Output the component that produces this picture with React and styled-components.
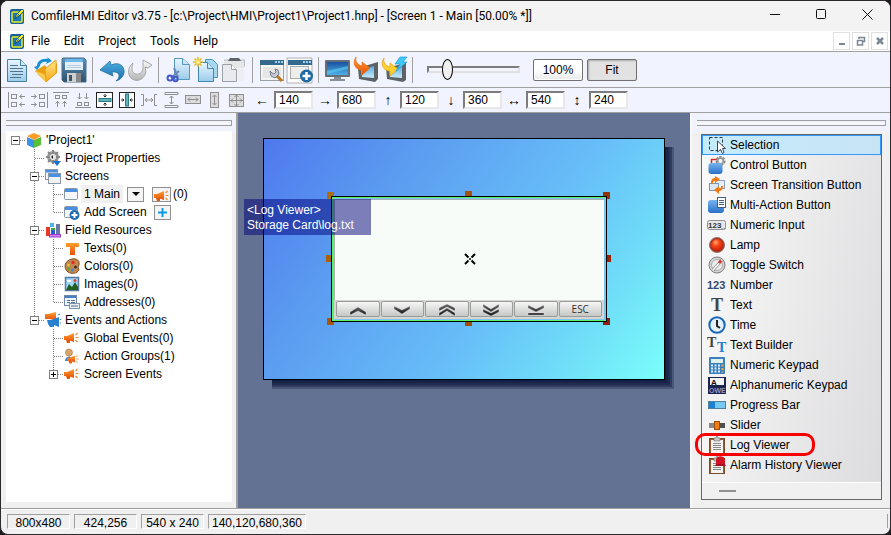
import { useState } from 'react';
import styled, { createGlobalStyle } from 'styled-components';

const toolGroups = [
    [['New', 'newDoc'], ['Open', 'open'], ['Save', 'save']],
    [['Undo', 'undo'], ['Redo', 'redo']],
    [['Cut', 'cut'], ['Copy', 'copy'], ['Paste', 'paste']],
    [['Screen settings', 'winTool'], ['Add screen', 'winAdd']],
    [['Simulate', 'monitor'], ['Download', 'download'], ['Quick download', 'flash']],
];

const alignTools = [
    ['Align left', 'alignLeft'], ['Align right', 'alignRight'], ['Align top', 'alignTop'],
    ['Align bottom', 'alignBottom'], ['Center vertically', 'centerV'], ['Center horizontally', 'centerH'],
    ['Space across', 'spaceH'], ['Space down', 'spaceV'], ['Same width', 'sameW'],
    ['Same height', 'sameH'], ['Same size', 'sameSize'],
];

const fields = [
    ['Left', '←', '140'], ['Right', '→', '680'], ['Top', '↑', '120'],
    ['Bottom', '↓', '360'], ['Width', '↔', '540'], ['Height', '↕', '240'],
];

// cells: b = blank, v = line, t = tee, e = last branch; box is drawn on the last cell
const treeRows = [
    { cells: 'r', box: '-', icon: 'cube', text: "'Project1'" },
    { cells: 'bt', icon: 'gear', text: 'Project Properties' },
    { cells: 'bt', box: '-', icon: 'windows', text: 'Screens' },
    { cells: 'bvt', icon: 'win', text: '1 Main', extra: 'main' },
    { cells: 'bve', icon: 'winPlus', text: 'Add Screen', extra: 'add' },
    { cells: 'bt', box: '-', icon: 'fields', text: 'Field Resources' },
    { cells: 'bvt', icon: 'orangeT', text: 'Texts(0)' },
    { cells: 'bvt', icon: 'palette', text: 'Colors(0)' },
    { cells: 'bvt', icon: 'picture', text: 'Images(0)' },
    { cells: 'bve', icon: 'address', text: 'Addresses(0)' },
    { cells: 'be', box: '-', icon: 'events', text: 'Events and Actions' },
    { cells: 'bbt', icon: 'horn', text: 'Global Events(0)' },
    { cells: 'bbt', icon: 'userHorn', text: 'Action Groups(1)' },
    { cells: 'bbe', box: '+', icon: 'horn', text: 'Screen Events' },
];

const toolbox = [
    ['Selection', 'select'], ['Control Button', 'control'], ['Screen Transition Button', 'transition'],
    ['Multi-Action Button', 'multi'], ['Numeric Input', 'numInput'], ['Lamp', 'lamp'],
    ['Toggle Switch', 'toggle'], ['Number', 'number'], ['Text', 'text'], ['Time', 'time'],
    ['Text Builder', 'builder'], ['Numeric Keypad', 'keypad'], ['Alphanumeric Keypad', 'alpha'],
    ['Progress Bar', 'progress'], ['Slider', 'slider'], ['Log Viewer', 'log'],
    ['Alarm History Viewer', 'alarm'],
];

const handles = [
    [63, 53, '#b06c0c'], [201, 52, '#a4520c'], [339, 53, '#943208'], [62, 116, '#ac620c'],
    [340, 116, '#942408'], [63, 179, '#ac560c'], [201, 180, '#a44808'], [339, 179, '#901c10'],
];

const horn = (
    <>
        <path d="M0 6h3l7-3v9l-6-2H0z" fill="url(#orange)" />
        <path d="M2 10h4v3H3z" fill="#e05a08" />
        <path d="M11.500 5l2-2M11.500 7.500h3M11.500 10l2 2" stroke="#f08a40" strokeWidth="1.200" />
    </>
);
const miniWin = (
    <>
        <rect x=".5" y="2.500" width="13" height="11" rx="1" fill="#f4f6f8" stroke="#8a98a8" />
        <path d="M1 3h12v3H1z" fill="#4a8ee0" />
    </>
);
const clipboard = (
    <>
        <rect x="1.500" y="2.500" width="15" height="15" fill="#9a5a30" stroke="#7c4c2c" />
        <path d="M3 4h12v13H3z" fill="#f4f4f2" />
        <path d="M5 7.500h8M5 9.500h8M5 11.500h8M5 13.500h8" stroke="#888" />
        <path d="M6 5V2h2l1-2 1 2h2v3z" fill="#c8c8c4" stroke="#777" strokeWidth=".7" />
    </>
);

const icons = {
    logo: [16, <>
        <rect x="1" y="1" width="14" height="15" rx="2" fill="#16619c" />
        <rect x="3" y="4" width="10" height="10" rx="1" fill="#1c78b8" stroke="#e8ea20" strokeWidth="1.500" />
        <path d="M6 11l1-4 6-6 2 2-6 6z" fill="#f4ee20" stroke="#155488" strokeWidth="1" />
        <path d="M7 10l3-4" stroke="#155488" />
    </>],
    newDoc: [26, <>
        <path d="M2.500 2.500h13l6 6v16h-19z" fill="url(#sheet)" stroke="#477d9e" />
        <path d="M15.500 2.500v6h6" fill="#cfe8f8" stroke="#477d9e" />
        <path d="M5 8.500h8M5 11.500h13M5 14.500h13M7 17.500h11M5 20.500h11" stroke="#54738a" />
    </>],
    open: [26, <>
        <path d="M2 14l10-6 2 3 8-8 2 4v9l-11 9z" fill="#e8a010" />
        <path d="M3 14l10 4v7L5 18z" fill="#f8c850" />
        <path d="M12 12l11-9v13l-10 9z" fill="url(#gold)" stroke="#e49a0c" strokeWidth=".8" />
        <path d="M4 9c0-5 5-8 11-7l-1-2 5 4-6 3 1-2c-4-1-7 1-7 4l-3 4-3-3z" fill="#1690d0" />
    </>],
    save: [26, <>
        <path d="M2 1h21l2 2v22H3l-2-2V2z" fill="url(#navy)" stroke="#4a7090" />
        <path d="M4 2h18v11H4z" fill="#e4f1fa" />
        <path d="M4 2h18v3H4z" fill="#6cb8e8" />
        <path d="M6 8.500h14M6 10.500h14" stroke="#b8cedc" />
        <rect x="6" y="16" width="14" height="9" fill="#888" />
        <path d="M6 16h9v9H6z" fill="#d0d0d0" />
        <rect x="8" y="18" width="3" height="6" fill="#3a5468" />
    </>],
    undo: [26, <path d="M1 13L11 4l1 4c9-4 14 2 13 8-1 4-4 7-8 8 5-4 4-10-4-9l1 4z" fill="url(#blue)" stroke="#2474a4" strokeWidth=".8" />],
    redo: [26, <path d="M25 8L16 3v4c1 8-3 11-7 10-4-1-5-5-3-11-5 4-6 11-2 15 5 5 13 2 15-6l-1-5 3 1z" fill="url(#silver)" stroke="#a0a0a0" strokeWidth=".9" />],
    cut: [26, <>
        <path d="M9.500 1.500h8l7 6v15h-15z" fill="url(#sheet)" stroke="#5898c0" />
        <path d="M17.500 1.500v6h7" fill="#c8e6f8" stroke="#5898c0" />
        <path d="M9 11l4 9M14 14l-8 7" stroke="#6c88b8" strokeWidth="2" />
        <circle cx="5" cy="21" r="2.500" fill="none" stroke="#4458c8" strokeWidth="2" />
        <circle cx="10.500" cy="22" r="2.200" fill="none" stroke="#4458c8" strokeWidth="2" />
    </>],
    copy: [26, <>
        <path d="M12.500 2.500h7l5 5v13h-12z" fill="#a8d8f0" stroke="#4898c0" />
        <path d="M5.500 5.500h9l6 6v13h-15z" fill="url(#sheet)" stroke="#4088b0" />
        <path d="M14.500 5.500v6h6" fill="#c8e6f8" stroke="#4088b0" />
        <path d="M5 0v10M0 5h10M1.500 1.500l7 7M8.500 1.500l-7 7" stroke="#e8b820" strokeWidth="1.500" />
        <circle cx="5" cy="5" r="2" fill="#fff088" />
    </>],
    paste: [26, <>
        <path d="M3 3h21v8H3z" fill="#e4e6e8" />
        <path d="M3 3h21M23.500 3v6" stroke="#b8bcc0" />
        <path d="M7 4l2-3h9l2 3z" fill="#606468" />
        <path d="M1.500 7.500h9l5 5v12h-14z" fill="#e8eaf0" stroke="#9ca0a8" />
        <path d="M10.500 7.500v5h5" fill="#fff" stroke="#9ca0a8" />
        <path d="M16 12h7v12h-6" fill="#eceef4" />
    </>],
    winTool: [26, <>
        <rect x="1.500" y="3.500" width="23" height="20" fill="#f4f4f2" stroke="#9aa0a4" />
        <path d="M1 3h24v5H1z" fill="#34688c" />
        <path d="M16 4h2v2h-2zM19 4h2v2h-2zM22 4h2v2h-2z" fill="#9cd0f0" />
        <rect x="4" y="10" width="18" height="11" fill="#e6e6e4" />
        <path d="M17 18l6 6" stroke="#b87820" strokeWidth="3" />
        <path d="M11 14l1 5 4 2 4-4-1-4-3-1 1 3-2 2-2-1z" fill="#c8ccd8" stroke="#606480" strokeWidth=".8" />
    </>],
    winAdd: [26, <>
        <path d="M0 26V1h25v25z" fill="#fdfdfd" stroke="#b0b0b0" />
        <path d="M1 3h24v5H1z" fill="#34688c" />
        <path d="M16 4h2v2h-2zM19 4h2v2h-2zM22 4h2v2h-2z" fill="#9cd0f0" />
        <rect x="3.500" y="9.500" width="18" height="12" fill="#ededeb" stroke="#aaa" />
        <circle cx="19.500" cy="19" r="6.500" fill="#1e68a4" />
        <path d="M19.500 15v8M15.500 19h8" stroke="#fff" strokeWidth="2.500" />
    </>],
    monitor: [26, <>
        <rect x="0" y="3" width="25" height="17" rx="1" fill="#647078" />
        <rect x="2" y="5" width="21" height="13" fill="url(#screenBlue)" />
        <path d="M2 14l21-5v3L2 17z" fill="#5ad0f4" opacity=".6" />
        <path d="M9 20h7v2h4v2H5v-2h4z" fill="#888f96" />
    </>],
    download: [26, <>
        <path d="M5 11l20-6v17l-3 3-16-3z" fill="#5c6266" />
        <path d="M8 13l13-4v12l-12-1z" fill="url(#sky)" />
        <path d="M3 0c-4 6-1 13 6 13v5l8-7-8-6v4C5 8 2 5 3 0z" fill="url(#orange)" stroke="#e86a10" strokeWidth=".7" />
    </>],
    flash: [26, <>
        <path d="M5 11l20-5v17l-3 2-16-3z" fill="#5c6266" />
        <path d="M8 13l13-4v12l-12-1z" fill="url(#sky)" />
        <path d="M3 1c-4 6-1 13 6 13v5l8-7-8-6v4C5 9 2 6 3 1z" fill="#ffd030" stroke="#e0a010" strokeWidth=".7" />
        <path d="M19 0h7l-4 5h4l-11 9 4-7h-5z" fill="#40c8f8" stroke="#1098d0" strokeWidth=".6" />
    </>],

    alignLeft: [18, <g stroke="#8f8f8f" fill="none"><path d="M.5 1v16M12 5.500h5M12 13.500h5" /><rect x="3.500" y="3.500" width="5" height="4" /><rect x="3.500" y="11.500" width="5" height="4" /><path d="M14 3.500l-2.500 2 2.500 2M14 11.500l-2.500 2 2.500 2" /></g>],
    alignRight: [18, <g stroke="#8f8f8f" fill="none"><path d="M17.500 1v16M1 5.500h5M1 13.500h5" /><rect x="9.500" y="3.500" width="5" height="4" /><rect x="9.500" y="11.500" width="5" height="4" /><path d="M4 3.500l2.500 2L4 7.500M4 11.500l2.500 2-2.500 2" /></g>],
    alignTop: [18, <g stroke="#8f8f8f" fill="none"><path d="M1 1.500h16M5.500 10v6M12.500 10v6" /><rect x="3.500" y="4.500" width="4" height="3" /><rect x="10.500" y="4.500" width="4" height="3" /><path d="M3.500 12.500l2-2 2 2M10.500 12.500l2-2 2 2" /></g>],
    alignBottom: [18, <g stroke="#8f8f8f" fill="none"><path d="M1 16.500h16M5.500 2v6M12.500 2v6" /><rect x="3.500" y="11.500" width="4" height="3" /><rect x="10.500" y="11.500" width="4" height="3" /><path d="M3.500 6l2 2 2-2M10.500 6l2 2 2-2" /></g>],
    centerV: [18, <><rect x=".5" y="1.500" width="16" height="15" fill="#fdfdff" stroke="#222" /><rect x="3" y="7.500" width="12" height="3" fill="#5fb4bc" stroke="#2a7880" /><path d="M9 3v3M7.500 4.500L9 6l1.500-1.500M9 15v-3M7.500 13.500L9 12l1.500 1.500" stroke="#223" fill="none" /></>],
    centerH: [18, <><rect x="1.500" y="1.500" width="15" height="15" fill="#fdfdff" stroke="#222" /><rect x="7.500" y="3" width="3" height="12" fill="#5fb4bc" stroke="#2a7880" /><path d="M3 9h3M4.500 7.500L6 9l-1.500 1.500M15 9h-3M13.500 7.500L12 9l1.500 1.500" stroke="#223" fill="none" /></>],
    spaceH: [18, <g stroke="#8f8f8f" fill="none"><path d="M1 3.500h2.500v11H1M17 3.500h-2.500v11H17M5 9h8M7 7L5 9l2 2M11 7l2 2-2 2" /></g>],
    spaceV: [18, <g stroke="#8f8f8f" fill="none"><path d="M3 1.500h13v2H3zM3 14.500h13v2H3zM9.500 5v8M7.500 7l2-2 2 2M7.500 11l2 2 2-2" /></g>],
    sameW: [18, <g stroke="#8f8f8f" fill="#dcdcdc"><rect x="1.500" y="4.500" width="15" height="8" /><path d="M4 8.500h10M6 6.500l-2 2 2 2M12 6.500l2 2-2 2" fill="none" /></g>],
    sameH: [18, <g stroke="#8f8f8f" fill="#dcdcdc"><rect x="4.500" y="1.500" width="8" height="15" /><path d="M8.500 4v10M6.500 6l2-2 2 2M6.500 12l2 2 2-2" fill="none" /></g>],
    sameSize: [18, <g stroke="#8f8f8f" fill="#dcdcdc"><rect x="1.500" y="3.500" width="14" height="12" /><path d="M8.500 3v13M1 9.500h15M6.500 6l2-2 2 2M6.500 13l2 2 2-2M5 7.500l-2 2 2 2M12 7.500l2 2-2 2" fill="none" /></g>],

    cube: [16, <>
        <path d="M1 5l7 3v8l-7-3z" fill="#3894e8" />
        <path d="M15 5L8 8v8l7-3z" fill="#58c038" />
        <path d="M1 4l7-3 7 3-7 4z" fill="#ff9c28" />
    </>],
    gear: [16, <>
        <circle cx="8" cy="7" r="4.500" fill="none" stroke="#999" strokeWidth="3" />
        <path d="M8 0v4M8 10v4M1 7h4M11 7h4M3 2l3 3M10 9l3 3M13 2l-3 3M3 12l3-3" stroke="#888" strokeWidth="2" />
        <circle cx="8" cy="7" r="3" fill="#e4e4e4" />
        <path d="M6 7l2-2v4z" fill="#222" />
        <path d="M8 11h8l-4 5z" fill="#1870d0" />
    </>],
    windows: [16, <>
        <rect x=".5" y="1.500" width="12" height="10" fill="#f0f4f8" stroke="#8898a8" />
        <path d="M1 2h11v2.500H1z" fill="#4a90e0" />
        <rect x="3.500" y="5.500" width="12" height="10" fill="#f0f2f4" stroke="#8898a8" />
        <path d="M4 6h11v3H4z" fill="#4a90e0" />
    </>],
    win: [16, miniWin],
    winPlus: [16, <>
        {miniWin}
        <circle cx="10.500" cy="11" r="5" fill="#246ab0" />
        <path d="M10.500 8v6M7.500 11h6" stroke="#fff" strokeWidth="2" />
    </>],
    fields: [16, <>
        <rect x="1" y="5" width="4" height="9" fill="#e83828" />
        <rect x="6" y="7" width="4" height="7" fill="#3058d8" />
        <rect x="5" y="1" width="4" height="4" fill="#48b8e8" />
        <rect x="11" y="2" width="4" height="10" fill="#6878a8" />
        <path d="M6 6h4v2H6z" fill="#38a838" />
        <rect x="4.500" y="12.500" width="11" height="2.500" fill="#d080f0" stroke="#9840c8" />
    </>],
    orangeT: [16, <path d="M2 3h13v4h-4v8H6V7H2z" fill="url(#orange)" />],
    palette: [16, <>
        <path d="M8 1c5-1 8 2 7 6l-1 2 1 3c-2 4-8 4-11 2-4-3-5-11 4-13z" fill="#c08850" stroke="#80501c" />
        <circle cx="9" cy="4.500" r="1.700" fill="#e82828" /><circle cx="4.500" cy="7" r="1.500" fill="#e8c030" />
        <circle cx="4.500" cy="11" r="1.500" fill="#48b038" /><circle cx="8.500" cy="12" r="1.500" fill="#3888e0" />
        <circle cx="11.500" cy="9" r="1.500" fill="#40302c" />
    </>],
    picture: [16, <>
        <rect x="1.500" y="1.500" width="13" height="13" fill="#a0d8fc" stroke="#5878a0" strokeWidth="1.500" />
        <path d="M2 14l3-6 3 3 3-5 3 5v3z" fill="#206020" />
        <circle cx="11" cy="4.500" r="1.500" fill="#e84030" />
        <path d="M3 5h4" stroke="#fff" strokeWidth="2" />
    </>],
    address: [16, <>
        <rect x=".5" y="1.500" width="12" height="10" fill="#f0f4f8" stroke="#7088a8" />
        <path d="M1 2h11v2H1z" fill="#4a80c0" />
        <path d="M3 6.500h3M7 6.500h4M3 8.500h3M7 8.500h4" stroke="#587090" />
        <rect x="5.500" y="9.500" width="10" height="5" fill="#e8eef4" stroke="#8098b0" />
        <path d="M7 12h7" stroke="#587090" />
    </>],
    events: [16, <>
        <path d="M0 2h3l8-2v8L4 7H0z" fill="url(#orange)" />
        <path d="M2 8h4l8-3v10l-5-2v2H5l-2-3z" fill="#2880d0" />
        <path d="M13 3l2-1M15 8l1-1M15 11h1" stroke="#2880d0" />
    </>],
    horn: [16, horn],
    userHorn: [16, <>
        <path d="M1 13c0-6 8-6 8 0z" fill="#4888d0" />
        <circle cx="5" cy="4.500" r="3.500" fill="#d8a468" stroke="#a87840" strokeWidth=".6" />
        <g transform="translate(3 5) scale(.8)">{horn}</g>
    </>],

    select: [18, <>
        <rect x="1.500" y="1.500" width="13" height="13" fill="none" stroke="#333" strokeDasharray="3 2" />
        <path d="M9.500 5v11l3-2.500 2 4 1.500-1-1.500-4h3z" fill="#fff" stroke="#445" />
    </>],
    control: [18, <>
        <path d="M3.500 8V3.500H9" stroke="#e02020" strokeWidth="1.500" fill="none" />
        <circle cx="12.500" cy="5" r="3.500" fill="none" stroke="#888" strokeWidth="3" strokeDasharray="2 1" />
        <circle cx="12.500" cy="5" r="3" fill="none" stroke="#999" strokeWidth="1.500" />
        <rect x=".5" y="7" width="14" height="11" rx="3" fill="url(#blueBtn)" />
    </>],
    transition: [18, <>
        <rect x="7.500" y="4.500" width="9" height="8" fill="#e8eef4" stroke="#8aa4c4" />
        <rect x="1.500" y="7.500" width="9" height="7" fill="#dbe8f4" stroke="#7894b8" />
        <path d="M3 7c0-4 2-5 4-5V0l5 3-5 4V5C5 5 5 6 5 8z" fill="#f47810" />
        <path d="M15 10c0 4-2 5-4 5v3l-5-4 5-4v3c2 0 2-1 2-3z" fill="#f47810" />
    </>],
    multi: [18, <>
        <rect x="0" y="4" width="16" height="13" rx="3" fill="url(#blueBtn)" />
        <rect x="9.500" y="1.500" width="8" height="10" fill="#fff" stroke="#486080" />
        <path d="M11 4.500h5M11 6.500h5M11 8.500h5" stroke="#486080" />
    </>],
    numInput: [18, <>
        <rect x="-.5" y="4.500" width="18" height="9" rx="2" fill="#e8e8e8" stroke="#909090" />
        <text x="0" y="12" fontSize="8" fontWeight="bold" fill="#333">123_</text>
    </>],
    lamp: [18, <>
        <circle cx="9" cy="9" r="7.500" fill="#a03020" stroke="#907870" />
        <circle cx="9" cy="9" r="6" fill="url(#lampGlow)" />
    </>],
    toggle: [18, <>
        <circle cx="9" cy="9" r="8" fill="#d4d4d4" stroke="#808080" />
        <circle cx="9" cy="9" r="5.500" fill="#ececec" stroke="#aaa" />
        <path d="M5 14L14 4" stroke="#909090" strokeWidth="3" /><path d="M5 14L14 4" stroke="#fff" strokeWidth="1.500" />
        <path d="M11 7l2-2.500" stroke="#e82020" strokeWidth="2.500" />
    </>],
    number: [18, <text x="-1" y="13" fontSize="11" fontWeight="bold" fill="#344a70">123</text>],
    text: [18, <text x="3" y="15" fontSize="18" fontWeight="bold" fontFamily="Liberation Serif" fill="#444">T</text>],
    time: [18, <>
        <circle cx="9" cy="9" r="7.700" fill="#e4f0f8" stroke="#1868b4" strokeWidth="2" />
        <path d="M9 4v6l3 2" stroke="#222" strokeWidth="2" fill="none" />
    </>],
    builder: [18, <>
        <text x="-1" y="11" fontSize="14" fontWeight="bold" fontFamily="Liberation Serif" fill="#444">T</text>
        <text x="9" y="16" fontSize="14" fontWeight="bold" fontFamily="Liberation Serif" fill="#1c80d0">T</text>
    </>],
    keypad: [18, <>
        <rect x="1" y="1" width="16" height="17" rx="1" fill="#3a80c0" />
        <rect x="3" y="3" width="12" height="4" fill="#e0f0e8" />
        <path d="M3 9.500h9M3 12.500h9M3 15.500h9" stroke="#d8ecfa" strokeWidth="2" strokeDasharray="2 1.500" />
        <path d="M14.500 8.500v8" stroke="#f0b040" strokeWidth="2" strokeDasharray="2 1.500" />
    </>],
    alpha: [18, <>
        <rect x="0" y="1" width="18" height="17" fill="#1c2450" />
        <rect x="2" y="2" width="14" height="7" fill="#f4f4f4" />
        <text x="3" y="9" fontSize="8" fontWeight="bold" fill="#111">A_</text>
        <text x="1" y="17" fontSize="7" fontWeight="bold" fill="#9098c0">OWE</text>
    </>],
    progress: [18, <>
        <rect x=".5" y="5.500" width="17" height="7" fill="#78c8f4" stroke="#5080a0" />
        <path d="M1 6h6v6H1z" fill="#1c80d0" />
    </>],
    slider: [18, <>
        <path d="M1 7h16v5H1z" fill="#888" /><path d="M12 7h5v5h-5z" fill="#505050" />
        <rect x="6.500" y="5.500" width="5" height="8" fill="#f07c10" stroke="#a04c08" />
    </>],
    log: [18, clipboard],
    alarm: [18, <>
        {clipboard}
        <path d="M7 10l1-2V4c0-5 9-5 9 0v4l1 2z" fill="#d01424" />
        <path d="M8 9h9" stroke="#801018" />
    </>],
};

const keys = [
    ['Up', 'M4 10l8-5 8 5v3l-8-4-8 4z'],
    ['Down', 'M4 4l8 4 8-4v3l-8 5-8-5z'],
    ['Page up', 'M4 6l8-4 8 4v3l-8-4-8 4zM4 11l8-5 8 5v3l-8-5-8 5z'],
    ['Page down', 'M4 2l8 5 8-5v3l-8 5-8-5zM4 7l8 4 8-4v3l-8 4-8-4z'],
    ['End', 'M4 3l8 4 8-4v3l-8 4-8-4zM4 11h16v2H4z'],
];

function Icon({ name }){
    const [size, art] = icons[name];
    return <Art width={size} height={size} viewBox={`0 0 ${size} ${size}`} aria-hidden="true">{art}</Art>
}

function Gradients(){
    const pairs = [
        ['orange', '#ffa030', '#e85008'], ['sheet', '#e8f6ff', '#9cccec'], ['gold', '#ffe890', '#f4a810'],
        ['navy', '#5c94bc', '#2c5068'], ['blue', '#4cb0e0', '#1c6ca8'], ['silver', '#fcfcfc', '#b4b4b4'],
        ['screenBlue', '#1850a0', '#50b0e8'], ['sky', '#58a8e0', '#c8ecfc'],
        ['blueBtn', '#78b4f0', '#2870c8'], ['key', '#666', '#111'],
    ];
    return (
        <GradientStore width="0" height="0" aria-hidden="true">
            <defs>
                {pairs.map(([id, from, to]) => (
                    <linearGradient key={id} id={id} x1="0" y1="0" x2="0" y2="1">
                        <stop offset="0" stopColor={from} />
                        <stop offset="1" stopColor={to} />
                    </linearGradient>
                ))}
                <radialGradient id="lampGlow" cx=".4" cy=".3" r=".7">
                    <stop offset="0" stopColor="#ffb070" />
                    <stop offset=".4" stopColor="#f84818" />
                    <stop offset="1" stopColor="#c82008" />
                </radialGradient>
            </defs>
        </GradientStore>
    )
}

function TreeRow({ row }){
    const last = row.cells.length - 1;
    return (
        <TreeItem>
            {row.cells.split('').map((kind, i) => (
                <Cell key={i} $kind={kind}>
                    {i === last && row.box && <Expander aria-label={`Toggle ${row.text}`}>{row.box === '+' && <i />}</Expander>}
                </Cell>
            ))}
            <TreeIcon><Icon name={row.icon} /></TreeIcon>
            <TreeText $shaded={row.extra === 'main'}>{row.text}</TreeText>
            {row.extra === 'main' && (
                <>
                    <SmallButton aria-label="Screen menu"><svg width="8" height="4"><path d="M0 0h8L4 4z" /></svg></SmallButton>
                    <SmallButton $second aria-label="Screen events"><Icon name="horn" /></SmallButton>
                    <span>(0)</span>
                </>
            )}
            {row.extra === 'add' && (
                <SmallButton aria-label="Add screen"><svg width="9" height="9"><path d="M4.500 0v9M0 4.500h9" stroke="#0c9ce8" strokeWidth="2" /></svg></SmallButton>
            )}
        </TreeItem>
    )
}

export default function App(){

    const [zoom, setZoom] = useState(17);
    const [values, setValues] = useState(fields.map(f => f[2]));
    const [tool, setTool] = useState('Selection');

    return (
        <>
            <GlobalStyle />
            <Gradients />
            <Window>
                <TitleBar>
                    <Icon name="logo" />
                    <Title>ComfileHMI Editor v3.75 - [c:\Project\HMI\Project1\Project1.hnp] - [Screen 1 - Main [50.00% *]]</Title>
                    <CaptionButton aria-label="Minimize"><svg width="11" height="11"><path d="M0 5.500h10" stroke="#111" /></svg></CaptionButton>
                    <CaptionButton aria-label="Maximize"><svg width="11" height="11"><rect x=".5" y=".5" width="9" height="9" rx="1" fill="none" stroke="#111" /></svg></CaptionButton>
                    <CaptionButton aria-label="Close"><svg width="11" height="11"><path d="M.5.500l10 10M10.500.500l-10 10" stroke="#111" /></svg></CaptionButton>
                </TitleBar>
                <MenuBar>
                    <Icon name="logo" />
                    <Menus>
                        {['File', 'Edit', 'Project', 'Tools', 'Help'].map(m => <MenuButton key={m}>{m}</MenuButton>)}
                    </Menus>
                    <ChildButton aria-label="Minimize screen"><svg width="10" height="10"><path d="M2 8h6" stroke="#7b8794" strokeWidth="2" /></svg></ChildButton>
                    <ChildButton aria-label="Restore screen"><svg width="10" height="10"><path d="M3 3V1.500h5.500v4H7M3 1.500h6" fill="none" stroke="#7b8794" strokeWidth="1.500" /><path d="M1 4.500h5.500V9H1.500V4" fill="none" stroke="#7b8794" strokeWidth="1.500" /></svg></ChildButton>
                    <ChildButton aria-label="Close screen"><svg width="10" height="10"><path d="M2 2l6 6M8 2L2 8" stroke="#7b8794" strokeWidth="2.500" /></svg></ChildButton>
                </MenuBar>

                <Toolbar>
                    {toolGroups.map((group, i) => (
                        <ToolGroup key={i}>
                            {group.map(([label, icon]) => <ToolButton key={icon} aria-label={label}><Icon name={icon} /></ToolButton>)}
                        </ToolGroup>
                    ))}
                    <ZoomSlider type="range" aria-label="Zoom" value={zoom} onChange={e => setZoom(e.target.value)} />
                    <ZoomButton>100%</ZoomButton>
                    <ZoomButton $pressed>Fit</ZoomButton>
                </Toolbar>
                <AlignBar>
                    {alignTools.map(([label, icon]) => <AlignButton key={icon} aria-label={label}><Icon name={icon} /></AlignButton>)}
                    <Fields>
                        {fields.map(([name, arrow], i) => (
                            <Field key={name}>
                                <Arrow>{arrow}</Arrow>
                                <NumberBox
                                    aria-label={name}
                                    value={values[i]}
                                    onChange={e => setValues(values.map((v, n) => n === i ? e.target.value : v))}
                                />
                            </Field>
                        ))}
                    </Fields>
                </AlignBar>

                <Main>
                    <SidePanel>
                        <Grip />
                        <Tree>
                            {treeRows.map(row => <TreeRow key={row.text} row={row} />)}
                        </Tree>
                    </SidePanel>

                    <Workspace>
                        <Screen>
                            {handles.map(([x, y, color]) => <Handle key={`${x}-${y}`} $x={x} $y={y} $color={color} />)}
                            <LogWidget>
                                <LogBody>
                                    <svg width="12" height="12"><path d="M1 1l3.500 3.500M11 1L7.500 4.500M1 11l3.500-3.500M11 11L7.500 7.500" stroke="#000" strokeWidth="2" /><path d="M5 6h2M6 5v2" stroke="#000" /></svg>
                                </LogBody>
                                <KeyRow>
                                    {keys.map(([label, d]) => (
                                        <Key key={label} aria-label={label}><svg width="24" height="16"><path d={d} fill="url(#key)" stroke="#eee" strokeWidth=".4" /></svg></Key>
                                    ))}
                                    <Key>ESC</Key>
                                </KeyRow>
                            </LogWidget>
                            <WidgetTag>&lt;Log Viewer&gt;<br />Storage Card\log.txt</WidgetTag>
                        </Screen>
                    </Workspace>

                    <ToolPanel>
                        <Grip />
                        <Toolbox>
                            <ToolList>
                                {toolbox.map(([label, icon]) => (
                                    <li key={label}>
                                        <ToolItem $active={tool === label} onClick={() => setTool(label)}>
                                            <Icon name={icon} />
                                            {label}
                                            {label === 'Log Viewer' && <Marker />}
                                        </ToolItem>
                                    </li>
                                ))}
                            </ToolList>
                            <ToolboxFoot><Dash /></ToolboxFoot>
                        </Toolbox>
                    </ToolPanel>
                </Main>

                <StatusBar>
                    <Status>800x480</Status>
                    <Status>424,256</Status>
                    <Status>540 x 240</Status>
                    <Status $wide>140,120,680,360</Status>
                    <StatusEnd />
                </StatusBar>
            </Window>
        </>
    )
}

const GlobalStyle = createGlobalStyle`
    * {
        box-sizing: border-box;
    }
    body {
        margin: 0;
        background: #1c1a1c;
        font-family: "Liberation Sans", Arial, sans-serif;
        font-size: 12px;
        color: #000;
    }
    button, input {
        font: inherit;
        color: inherit;
        padding: 0;
    }
    ul {
        margin: 0;
        padding: 0;
        list-style: none;
    }
`

const GradientStore = styled.svg`
    position: absolute;
`

const Art = styled.svg`
    display: block;
    flex: none;
    overflow: visible;
`

const Window = styled.div`
    min-height: 100vh;
    display: flex;
    flex-direction: column;
    border: 1px solid #2b292b;
    border-radius: 8px;
    overflow: hidden;
    background: #f0f0f0;
`

const TitleBar = styled.header`
    height: 30px;
    display: flex;
    align-items: center;
    padding-left: 8px;
    background: #f3f3f3;
    font-family: Roboto, "Open Sans", sans-serif;
`

const Title = styled.div`
    flex: 1;
    padding-left: 6px;
    white-space: nowrap;
    overflow: hidden;
`

const CaptionButton = styled.button`
    width: 46px;
    height: 30px;
    border: none;
    background: none;
`

const MenuBar = styled.nav`
    height: 20px;
    display: flex;
    align-items: center;
    gap: 2px;
    padding: 0 2px 0 8px;
    background: #fff;
    font-family: Roboto, "Open Sans", sans-serif;
`

const Menus = styled.div`
    flex: 1;
    display: flex;
    gap: 14px;
    padding-left: 4px;
`

const MenuButton = styled.button`
    border: none;
    background: none;
`

const ChildButton = styled.button`
    width: 17px;
    height: 18px;
    display: grid;
    place-items: center;
    border: 1px solid #e0e0e0;
    background: #fff;
`

const Toolbar = styled.div`
    height: 37px;
    display: flex;
    align-items: center;
    padding-left: 4px;
    border-top: 1px solid #a0a0a0;
    border-bottom: 1px solid #a0a0a0;
    background: #f1f4fe;
`

const ToolGroup = styled.div`
    display: flex;
    gap: 2px;
    padding-right: 5px;
    margin-right: 6px;
    border-right: 1px solid #a0a0a0;
`

const ToolButton = styled.button`
    width: 26px;
    height: 26px;
    border: none;
    background: none;
`

const ZoomSlider = styled.input`
    appearance: none;
    width: 93px;
    height: 22px;
    margin: 0 13px 0 8px;
    background: none;

    &::-webkit-slider-runnable-track {
        height: 7px;
        border: 2px solid;
        border-color: #7c7c7c #e0e0e0 #e0e0e0 #7c7c7c;
        background: #f1f4fe;
    }
    &::-webkit-slider-thumb {
        appearance: none;
        width: 11px;
        height: 21px;
        margin-top: -9px;
        border: 1px solid #000;
        border-radius: 50%;
        background: #f0f0f0;
    }
`

const ZoomButton = styled.button`
    width: 50px;
    height: 22px;
    margin-right: 4px;
    border: 1px solid #707070;
    border-radius: 2px;
    background: ${p => p.$pressed ? '#e2e2e2' : 'linear-gradient(#fff 50%, #e8e8e8)'};
    box-shadow: ${p => p.$pressed ? 'inset 1px 1px 2px #aaa' : 'inset 0 0 0 1px #fff'};
`

const AlignBar = styled.div`
    height: 24px;
    display: flex;
    align-items: center;
    gap: 4px;
    padding-left: 7px;
    background: #f1f4fe;
`

const AlignButton = styled.button`
    width: 18px;
    height: 18px;
    border: none;
    background: none;
`

const Fields = styled.div`
    display: flex;
`

const Field = styled.label`
    display: flex;
    align-items: center;
`

const Arrow = styled.span`
    width: 24px;
    text-align: center;
    font-size: 14px;
`

const NumberBox = styled.input`
    width: 39px;
    height: 18px;
    padding-left: 3px;
    border: 2px solid;
    border-color: #7c7c7c #e8e8e8 #e8e8e8 #7c7c7c;
    background: #fff;
`

const Main = styled.main`
    flex: 1;
    display: flex;
    border-top: 1px solid #a0a0a0;
`

const SidePanel = styled.aside`
    width: 237px;
    display: flex;
    flex-direction: column;
    padding: 7px 4px 6px 5px;
    border-right: 2px solid #a0a0a0;
    overflow: hidden;
    background: #f0f0f0;
`

const Grip = styled.div`
    height: 6px;
    border: 1px solid #a0a0a0;
    border-left: none;
    box-shadow: 0 0 0 7px #f0f3fe;
    background: linear-gradient(#f0f3fe 2px, #fff 2px 3px, #f0f3fe 3px);
`

const Tree = styled.ul`
    flex: 1;
    position: relative;
    margin-top: 5px;
    background: #fff;
`

const TreeItem = styled.li`
    height: 18px;
    display: flex;
    align-items: center;
    white-space: nowrap;
`

const dotsDown = 'repeating-linear-gradient(#808080 0 1px, transparent 1px 2px) 9px 0'
const dotsAcross = 'repeating-linear-gradient(90deg, #808080 0 1px, transparent 1px 2px) 10px 9px / 9px 1px no-repeat'
const cellLines = {
    b: 'none',
    r: dotsAcross,
    v: `${dotsDown} / 1px 18px no-repeat`,
    t: `${dotsDown} / 1px 18px no-repeat, ${dotsAcross}`,
    e: `${dotsDown} / 1px 10px no-repeat, ${dotsAcross}`,
}

const Cell = styled.span`
    width: 19px;
    height: 18px;
    flex: none;
    display: flex;
    align-items: center;
    justify-content: center;
    background: ${p => cellLines[p.$kind]};
`

const Expander = styled.button`
    width: 9px;
    height: 9px;
    display: grid;
    place-items: center;
    border: 1px solid #808080;
    background: linear-gradient(#000, #000) center / 5px 1px no-repeat #fff;

    i {
        width: 1px;
        height: 5px;
        background: #000;
    }
`

const TreeIcon = styled.span`
    margin-left: 1px;
`

const TreeText = styled.span`
    height: 18px;
    line-height: 18px;
    margin-left: 1px;
    padding: 0 3px;
    background: ${p => p.$shaded ? '#f0f0f0' : 'none'};
`

const SmallButton = styled.button`
    width: ${p => p.$second ? '19px' : '17px'};
    height: 15px;
    margin: 0 ${p => p.$second ? '2px' : '4px'} 0 4px;
    display: grid;
    place-items: center;
    overflow: hidden;
    border: 1px solid #909090;
    background: #f4f4f4;
`

const Workspace = styled.section`
    flex: 1;
    min-width: 0;
    display: flex;
    justify-content: center;
    align-items: flex-start;
    padding-top: 25px;
    background: #637293;
`

/* the edited screen, 800x480 at half scale */
const Screen = styled.div`
    position: relative;
    flex: none;
    width: 402px;
    height: 242px;
    border: 1px solid #000;
    background: linear-gradient(125deg, #4f79ee, #5b9cf0 28%, #67bef8 60%, #70e0f8 82%, #7afffb);
    box-shadow:
        5px 5px 0 -4px rgba(10, 22, 60, .4),
        6px 6px 0 -3px rgba(10, 22, 60, .4),
        7px 7px 0 -2px rgba(10, 22, 60, .4),
        8px 8px 0 -1px rgba(10, 22, 60, .4),
        9px 9px 0 0 rgba(10, 22, 60, .3);
`

const Handle = styled.i`
    position: absolute;
    left: ${p => p.$x}px;
    top: ${p => p.$y}px;
    width: 7px;
    height: 7px;
    background: ${p => p.$color};
`

const LogWidget = styled.div`
    position: absolute;
    left: 67px;
    top: 57px;
    width: 276px;
    height: 126px;
    display: flex;
    flex-direction: column;
    border: 1px solid #000;
    box-shadow: inset 0 0 0 1px #58f468, inset 0 0 0 2px #7cc4f0;
    padding: 2px;
    background: #b4b8bc;
`

const LogBody = styled.div`
    flex: 1;
    display: grid;
    place-items: center;
    padding-top: 17px;
    background: #f7fcf9;
    border-top: 1px solid #aab0b4;
    border-left: 1px solid #aab0b4;
`

const KeyRow = styled.div`
    display: flex;
    gap: 1px;
    padding: 1px 2px 2px;
    background: #d4d6d4;
`

const Key = styled.button`
    flex: 1;
    height: 16px;
    display: grid;
    place-items: center;
    border: 1px solid #999c99;
    border-radius: 2px;
    background: linear-gradient(#f6f6f6, #dedfde 50%, #c4c8c4);
    font-family: "Open Sans", sans-serif;
    font-size: 10px;
    line-height: 14px;
    color: #333;
`

const WidgetTag = styled.div`
    position: absolute;
    left: -20px;
    top: 60px;
    width: 127px;
    height: 36px;
    padding: 4px 3px;
    line-height: 15px;
    color: #fff;
    background: rgba(0, 0, 120, .5);
`

const ToolPanel = styled.aside`
    width: 200px;
    display: flex;
    flex-direction: column;
    padding: 7px 4px 8px 5px;
    border-left: 2px solid #f8f8f8;
    overflow: hidden;
    background: #f0f0f0;
`

const Toolbox = styled.div`
    flex: 1;
    display: flex;
    flex-direction: column;
    margin: 8px 4px 0;
    border: 1px solid #666;
`

const ToolList = styled.ul`
    flex: 1;
    background: linear-gradient(100deg, #fafafa, #dcdcde);
`

const ToolItem = styled.button`
    position: relative;
    width: 100%;
    height: 20px;
    display: flex;
    align-items: center;
    gap: 4px;
    padding-left: ${p => p.$active ? '5px' : '6px'};
    border: ${p => p.$active ? '1px solid #3399ff' : 'none'};
    background: ${p => p.$active ? 'linear-gradient(90deg, #c4ecfe, #c8e4f4)' : 'none'};
    text-align: left;
    white-space: nowrap;
`

const Marker = styled.i`
    position: absolute;
    left: -7px;
    top: -2px;
    width: 120px;
    height: 23px;
    border: 3px solid #f80000;
    border-radius: 10px;
`

const ToolboxFoot = styled.div`
    height: 17px;
    display: flex;
    align-items: center;
    padding-left: 17px;
    border-top: 1px solid #fff;
    background: #f0f0f0;
`

const Dash = styled.i`
    width: 17px;
    height: 2px;
    background: #909090;
`

const StatusBar = styled.footer`
    height: 26px;
    display: flex;
    align-items: flex-start;
    gap: 4px;
    padding: 5px 2px 0 6px;
    border-top: 1px solid #a0a0a0;
    box-shadow: inset 0 1px #fff;
`

const Status = styled.span`
    width: ${p => p.$wide ? '98px' : '63px'};
    height: 15px;
    line-height: 16px;
    text-align: center;
    white-space: nowrap;
    border: 1px solid;
    border-color: #a0a0a0 #fff #fff #a0a0a0;
`

const StatusEnd = styled.i`
    height: 14px;
    margin-left: auto;
    border-right: 1px solid #a0a0a0;
`
